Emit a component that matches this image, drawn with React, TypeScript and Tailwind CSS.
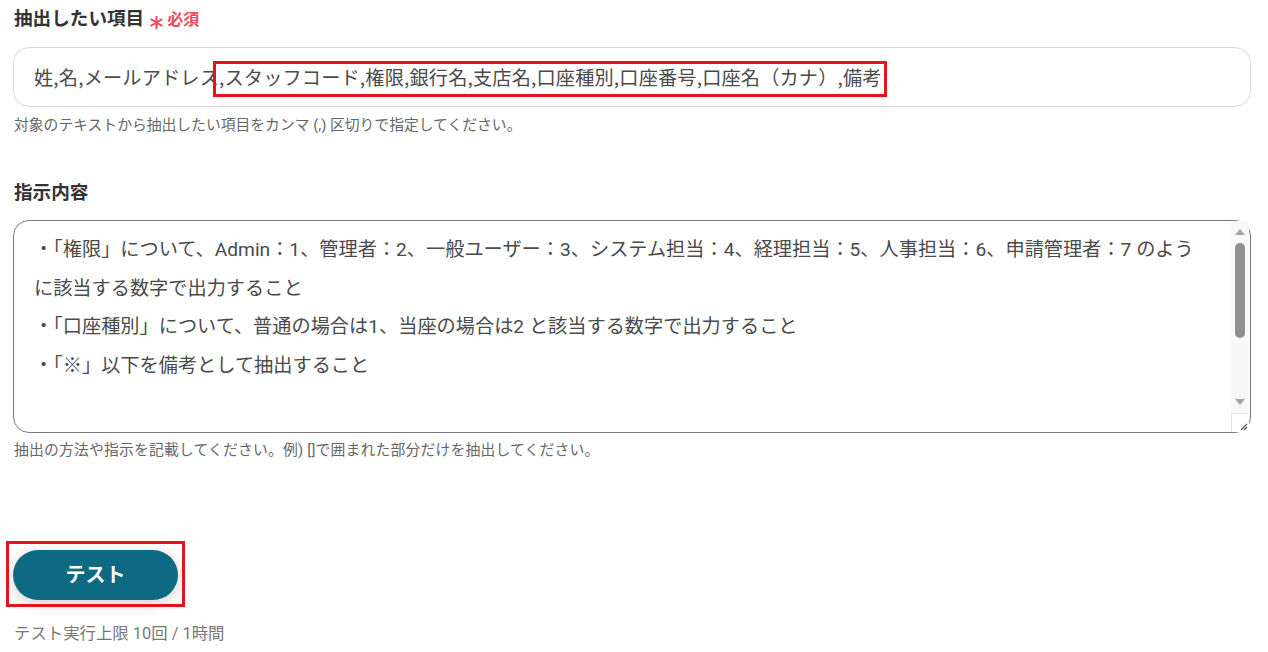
const jp = { fontFamily: 'Roboto, "Noto Sans CJK JP", "Noto Sans", sans-serif' }
const cjk = { fontFamily: '"Noto Sans CJK JP", "Noto Sans", sans-serif' }

const instructions =
  "・「権限」について、Admin：1、管理者：2、一般ユーザー：3、システム担当：4、経理担当：5、人事担当：6、申請管理者：7 のよう\nに該当する数字で出力すること\n・「口座種別」について、普通の場合は1、当座の場合は2 と該当する数字で出力すること\n・「※」以下を備考として抽出すること"

function FakeScrollbar() {
  return (
    <div className="pointer-events-none absolute right-[2px] top-[1px] bottom-[1px] w-[18px] flex flex-col bg-[#f8f8f8]">
      <div className="h-[22px] flex items-center justify-center">
        <svg width="10" height="6" viewBox="0 0 10 6">
          <path d="M5 0 L10 6 L0 6 Z" fill="#a3a3a3" />
        </svg>
      </div>
      <div className="flex-1 flex flex-col items-center">
        <div className="w-[10px] h-[95px] rounded-full bg-[#8f8f8f]" />
      </div>
      <div className="h-[14px] flex items-start justify-center">
        <svg width="10" height="6" viewBox="0 0 10 6">
          <path d="M0 0 L10 0 L5 6 Z" fill="#a3a3a3" />
        </svg>
      </div>
      <div className="h-[19px] border-t border-l border-[#e3e3e3] bg-white flex items-end justify-end pr-[1px] pb-[1px]">
        <svg width="9" height="9" viewBox="0 0 9 9">
          <path d="M8 2 L2 8 M8 5 L5 8" stroke="#555" strokeWidth="1.2" />
        </svg>
      </div>
    </div>
  )
}

export default function App() {
  return (
    <div className="min-h-[652px] bg-white pl-[13px] pr-[17px] pt-[7px]" style={jp}>
      {/* 抽出したい項目 */}
      <div className="flex items-center gap-[6px] pl-[1px] h-[26px]">
        <span className="text-[18.6px] font-bold text-[#333]">抽出したい項目</span>
        <span className="flex items-center gap-[4px] text-[16px] font-bold text-[#ef4a5c]">
          <svg width="13" height="13" viewBox="0 0 12 12" className="mt-[4px]">
            <path d="M6 0.5 V11.5 M1.2 3.2 L10.8 8.8 M10.8 3.2 L1.2 8.8" stroke="#ef4a5c" strokeWidth="1.8" strokeLinecap="round" />
          </svg>
          必須
        </span>
      </div>

      <div className="relative mt-[14px] h-[60px] rounded-2xl border border-[#d5d9de] flex items-center px-[20px]">
        <span className="text-[19.2px] text-[#4a4a4a] tracking-[0.15px] whitespace-nowrap" style={cjk}>
          姓,名,メールアドレス,スタッフコード,権限,銀行名,支店名,口座種別,口座番号,口座名（カナ）,備考
        </span>
        <div className="absolute left-[199px] top-[13px] w-[674px] h-[36px] border-[3px] border-[#e3141e] pointer-events-none" />
      </div>
      <p className="mt-[8px] pl-[1px] text-[14.8px] leading-[20px] text-[#666]">
        対象のテキストから抽出したい項目をカンマ (,) 区切りで指定してください。
      </p>

      {/* 指示内容 */}
      <div className="mt-[46px] pl-[1px] h-[26px] flex items-center">
        <span className="text-[18.6px] font-bold text-[#333]">指示内容</span>
      </div>
      <div className="relative mt-[13px]">
        <textarea
          readOnly
          value={instructions}
          className="block w-full h-[213px] resize-none overflow-hidden rounded-2xl border border-[#7a7a7a] bg-white pl-[20px] pr-[21px] pt-[10px] text-[19.2px] leading-[38.5px] text-[#4a4a4a] outline-none"
          style={jp}
        />
        <FakeScrollbar />
      </div>
      <p className="mt-[7px] pl-[1px] text-[14.8px] leading-[20px] tracking-[0.2px] text-[#666]">
        抽出の方法や指示を記載してください。例) []で囲まれた部分だけを抽出してください。
      </p>

      {/* テスト */}
      <div className="mt-[90px] relative w-[165px]">
        <button className="w-[165px] h-[50px] rounded-full bg-[#0d6a82] text-white text-[20px] font-bold shadow-[0_4px_16px_rgba(0,0,0,0.18)]">
          テスト
        </button>
        <div className="absolute -left-[7px] -top-[9px] w-[179px] h-[66px] border-[3px] border-[#e3141e] pointer-events-none" />
      </div>
      <p className="mt-[24px] pl-[1px] text-[16.4px] leading-[20px] text-[#777]">テスト実行上限 10回 / 1時間</p>
    </div>
  )
}
